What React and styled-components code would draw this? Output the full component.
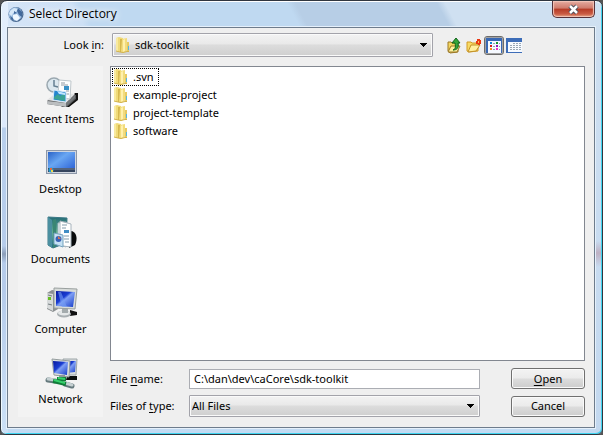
import React from "react";
import styled, { createGlobalStyle } from "styled-components";

const Global = createGlobalStyle`
  *, *::before, *::after { box-sizing: border-box; }
  body { margin: 0; background: #555; font: 11px/16px "Noto Sans", sans-serif; color: #000; }
  button, input, select { font: inherit; color: inherit; margin: 0; }
  svg { display: block; flex: none; }
  u { text-underline-offset: 2px; }
`;

const Window = styled.div`
  display: flex;
  flex-direction: column;
  min-height: 100vh;
  padding: 0 7px 6px 6px;
  border: 1px solid #30363f;
  border-radius: 7px 7px 6px 6px;
  box-shadow: inset 0 1px #fff, inset 1px 0 #effaff, inset -1px -1px #3fd5f1;
  background:
    linear-gradient(#35415500 245px, #35415555 253px, #35415500 262px) left / 6px 100% no-repeat,
    linear-gradient(#b0708000 240px, #b0708066 252px, #b0708000 266px) right / 7px 100% no-repeat,
    linear-gradient(#e4effc 0, #dce9fb 126px, #b8cfec 127px, #b5cbea 290px, #cce1f7 100%) left / 7px 100% no-repeat,
    linear-gradient(#cfe0f1, #c3d8ef) right / 7px 100% no-repeat,
    linear-gradient(#c3dbf3, #c3dbf3) bottom / 100% 7px no-repeat,
    linear-gradient(62deg, #dce9f9 0 20%, #cde0f5 36%, #bfd9f1 37% 62%, #b7cee6 63% 80%, #cfe0f1 81% 100%);
`;

const TitleBar = styled.header`
  display: flex;
  align-items: flex-start;
  height: 26px;
  padding-left: 1px;
  svg { margin-top: 5px; }
`;

const Title = styled.h1`
  flex: 1;
  margin: 4px 0 0 5px;
  font: 12px/18px "Open Sans", sans-serif;
  text-shadow: 0 0 6px #fff, 0 0 8px #fff;
`;

const CloseButton = styled.button`
  display: grid;
  place-items: center;
  width: 43px;
  height: 17px;
  margin-right: 0;
  padding: 0;
  border: 1px solid #56323a;
  border-top: 0;
  border-radius: 0 0 5px 5px;
  box-shadow: inset 0 0 1px 1px #f2c5b9;
  background: linear-gradient(#e4aaa0, #cf7b6c 45%, #b53a25 50%, #c95a43 80%, #e29a7a);
  svg { margin-top: 0; }
`;

const Content = styled.main`
  flex: 1;
  display: flex;
  flex-direction: column;
  gap: 9px;
  padding: 5px 9px 10px 10px;
  border: 1px solid #6e7c8c;
  box-shadow: 0 0 0 1px #e5f0fb;
  background: #efefef;
`;

const LookRow = styled.div`
  display: flex;
  align-items: center;
  gap: 8px;
`;

const LookLabel = styled.label`
  width: 86px;
  text-align: right;
`;

const SelectWrap = styled.div`
  position: relative;
  flex: 1;
  min-width: 0;
`;

const Select = styled.select`
  display: block;
  width: 100%;
  height: ${(p) => (p.$icon ? "24px" : "22px")};
  padding: 0 20px 0 ${(p) => (p.$icon ? "22px" : "2px")};
  appearance: none;
  border: 1px solid #a3a3aa;
  border-radius: 1px;
  outline: 0;
  box-shadow: inset 0 0 0 1px #fafafa;
  background: linear-gradient(#f3f3f3, #e9e9e9 45%, #dcdcdc 50%, #cfcfcf);
`;

const Adornment = styled.span`
  position: absolute;
  pointer-events: none;
  display: flex;
  align-items: center;
  top: 0;
  bottom: 0;
  ${(p) => (p.$side === "left" ? "left: 3px;" : "right: 6px;")}
`;

const Tools = styled.div`
  display: flex;
  align-items: center;
  padding-left: 3px;
  margin-right: 61px;
`;

const ToolButton = styled.button`
  display: grid;
  place-items: center;
  width: 20px;
  height: 19px;
  padding: 0;
  border: ${(p) => (p.$active ? "1px solid #6b6b6b" : "0")};
  border-radius: 3px;
  box-shadow: ${(p) => (p.$active ? "inset 0 0 0 1px #a2a2a2" : "none")};
  background: none;
`;

const Body = styled.div`
  flex: 1;
  display: flex;
  gap: 7px;
`;

const Places = styled.nav`
  display: flex;
  flex-direction: column;
  gap: 19px;
  width: 85px;
  padding: 10px 0;
  background: #f3f3f3;
`;

const Place = styled.button`
  display: flex;
  flex-direction: column;
  align-items: center;
  gap: 1px;
  width: 100%;
  padding: 0;
  border: 0;
  background: none;
  white-space: nowrap;
`;

const Main = styled.div`
  flex: 1;
  display: flex;
  flex-direction: column;
  gap: 7px;
  min-width: 0;
`;

const FileList = styled.ul`
  flex: 1;
  margin: 0;
  padding: 1px;
  list-style: none;
  border: 1px solid #828790;
  background: #fff;
`;

const FileItem = styled.li`
  display: flex;
`;

const FileButton = styled.button`
  display: flex;
  align-items: center;
  gap: 4px;
  height: 18px;
  padding: 0 4px 0 0;
  border: 1px dotted ${(p) => (p.$focused ? "#000" : "transparent")};
  background: none;
`;

const Form = styled.form`
  display: grid;
  grid-template-columns: 79px minmax(0, 1fr) 74px;
  row-gap: 6px;
  align-items: center;
`;

const TextField = styled.input`
  display: block;
  width: 100%;
  height: 20px;
  padding: 0 4px;
  border: 1px solid #abadb3;
  outline: 0;
  background: #fff;
`;

const Field = styled.div`
  margin-right: 31px;
`;

const PushButton = styled.button`
  height: 21px;
  padding: 0;
  border: 1px solid #707070;
  border-radius: 3px;
  box-shadow: inset 0 0 0 1px #fafafa;
  background: linear-gradient(#f3f3f3, #ebebeb 48%, #dcdcdc 52%, #cdcdcd);
`;

const Arrow = () => (
  <svg width="7" height="4" viewBox="0 0 7 4" shapeRendering="crispEdges">
    <path d="M0 0h7v1H6v1H5v1H4v1H3V3H2V2H1V1H0z" />
  </svg>
);

const Folder = () => (
  <svg width="16" height="16" viewBox="0 0 16 16">
    <path d="M1 1l3-1 4 1v14H4l-3-1z" fill="#f0db79" />
    <path d="M1 1h2v13H1z" fill="#f8eaa0" />
    <path d="M5 2h3v13H5z" fill="#d6b84e" />
    <path d="M7 2l5-1v13l-4 2-2-1z" fill="#f2dc7d" />
    <path d="M8 3l2-1v12l-2 1z" fill="#fff0ac" />
    <path d="M12 5h2v9l-2 1z" fill="#e6c964" />
    <path d="M13 9h1v4h-1z" fill="#54b7e1" />
    <path d="M1 14l4 1 3 .5 4-1h2" fill="none" stroke="#d2b34d" />
  </svg>
);

const AppIcon = () => (
  <svg width="16" height="17" viewBox="0 0 16 17">
    <circle cx="8" cy="8.500" r="7.500" fill="#4b6a92" />
    <circle cx="7.500" cy="8" r="6.800" fill="#9cbde0" />
    <path d="M2 5l4-3 4 1-2 3-3 1-1 3-3-2z" fill="#d6e8f8" />
    <path d="M10 2l4 4v5l-3-2-2-4z" fill="#41689b" />
    <path d="M5 9l4-1 3 4-3 3-4-2z" fill="#eff8ff" />
    <path d="M2 10l3 2 1 3-3-2zM6 5l3 2-3 1z" fill="#426a9d" />
  </svg>
);

const CloseIcon = () => (
  <svg width="13" height="11" viewBox="0 0 13 11">
    <path d="M3 2l7 7M10 2L3 9" stroke="#454c5a" strokeWidth="4.500" />
    <path d="M3 2l7 7M10 2L3 9" stroke="#fff" strokeWidth="2.500" />
  </svg>
);

const UpIcon = () => (
  <svg width="16" height="17" viewBox="0 0 16 17">
    <path d="M2 5h3l1 1h6v9l-8 1-2-2z" fill="#f5d760" stroke="#9b7826" />
    <path d="M2 15l3-6h9l-3 6z" fill="#fff19e" stroke="#9b7826" />
    <path d="M7 13c2-1 3-2 2-7H6l4-5 4 5h-2c1 5-1 7-5 7z" fill="#35a63a" stroke="#12651b" />
  </svg>
);

const NewFolderIcon = () => (
  <svg width="16" height="17" viewBox="0 0 16 17">
    <path d="M1 5h4l1 1h6v8l-9 1-2-1z" fill="#f7da65" stroke="#d29a25" />
    <path d="M2 15l3-7h9l-4 6z" fill="#fff0a0" stroke="#c29128" />
    <path d="M11 2h3v1h1v4h-1v1h-2V7h-2V4h1z" fill="#e93814" />
    <path d="M12 4h1v2h-1z" fill="#ffc14d" />
  </svg>
);

const ListIcon = () => (
  <svg width="16" height="15" viewBox="0 0 16 15" shapeRendering="crispEdges">
    <path d="M0 0h16v15H0z" fill="#3868b4" />
    <path d="M2 3h13v12H2z" fill="#f5f9ff" />
    <path d="M4 4h2v2H4z" fill="#1386d5" />
    <path d="M10 4h2v2h-2z" fill="#17952c" />
    <path d="M4 7h2v2H4z" fill="#d11b24" />
    <path d="M10 7h2v2h-2z" fill="#951bb3" />
    <path d="M4 10h2v2H4z" fill="#ee8b22" />
    <path d="M10 10h2v2h-2z" fill="#f32cc5" />
    <path d="M7 5.500h2M13 5.500h1M7 8.500h2M13 8.500h1M7 11.500h2M13 11.500h1" stroke="#8ca0b8" />
  </svg>
);

const DetailsIcon = () => (
  <svg width="16" height="15" viewBox="0 0 16 15" shapeRendering="crispEdges">
    <path d="M0 0h16v15H0z" fill="#3d6db8" />
    <path d="M2 4h14v10H2z" fill="#f6faff" />
    <path d="M7 5.500h8M4 7.500h11M4 9.500h11M4 11.500h11" stroke="#9aa7b4" strokeDasharray="2 1" />
  </svg>
);

const Gradients = () => (
  <defs>
    <linearGradient id="screenBlue" x1="0" y1="0" x2="1" y2="1">
      <stop stopColor="#07189e" />
      <stop offset=".4" stopColor="#1b3ed2" />
      <stop offset=".5" stopColor="#7f9ff4" />
      <stop offset="1" stopColor="#143bc8" />
    </linearGradient>
    <linearGradient id="deskBlue" x1="0" y1="0" x2="1" y2="1">
      <stop stopColor="#2a64c8" />
      <stop offset=".4" stopColor="#69a6f2" />
      <stop offset="1" stopColor="#2459d2" />
    </linearGradient>
    <linearGradient id="binder" x1="0" y1="0" x2="0" y2="1">
      <stop stopColor="#236a75" />
      <stop offset=".5" stopColor="#63af91" />
      <stop offset="1" stopColor="#236789" />
    </linearGradient>
  </defs>
);

const PlaceIcon = ({ children }) => (
  <svg width="34" height="34" viewBox="0 0 34 34">
    <Gradients />
    {children}
  </svg>
);

const RecentIcon = () => (
  <PlaceIcon>
    <path d="M23 27l8-10h3v7l-9 7h-8z" fill="#111" />
    <path d="M3 25l9-7 20 1v4l-9 8L3 28z" fill="#55585b" />
    <path d="M3 24l9-7 19 1-9 9z" fill="#e1e2e3" />
    <path d="M3 25l19 2v4L3 28z" fill="#bbbec0" />
    <path d="M22 27l9-8v3l-9 9z" fill="#74787b" />
    <circle cx="10" cy="9" r="7" fill="#dce8ef" stroke="#9ba8b0" strokeWidth="1.500" />
    <path d="M10 4v6l4 1" fill="none" stroke="#647f92" strokeWidth="1.500" />
    <path d="M15 4l12 1-1 18-12-2z" fill="#fff" stroke="#bfc7cc" />
    <path d="M17 7h4M17 9h7M22 12h3M22 15h3M22 18h3" stroke="#939ca5" />
    <path d="M20 10h5v4h-5z" fill="#3c92c7" />
    <path d="M10 14l12 2v10L9 24z" fill="#2385cf" stroke="#d8eafa" />
    <path d="M10 21l4-3 2 2 5-3v8l-11-2z" fill="#3ba395" />
    <path d="M13 15l8 2v2l-6-1z" fill="#bfe5ff" />
  </PlaceIcon>
);

const DesktopIcon = () => (
  <PlaceIcon>
    <path d="M2 4h31v24H2z" fill="#8d98a9" />
    <path d="M3 5h29v22H3z" fill="#d0d6df" />
    <path d="M4 6h27v20H4z" fill="url(#deskBlue)" />
    <path d="M4 22h27v4H4z" fill="#35455e" />
    <path d="M9 23h22" stroke="#74839a" />
    <circle cx="7" cy="24" r="2.500" fill="#279bd0" />
    <path d="M6 22h2v2H6z" fill="#ef6832" />
    <path d="M7 24h2v2H7z" fill="#f0d549" />
  </PlaceIcon>
);

const DocumentsIcon = () => (
  <PlaceIcon>
    <path d="M25 15c8-1 9 8 6 14l-6 3z" fill="#080a0b" />
    <path d="M4 1l19 1-1 25-13 5-5-3z" fill="url(#binder)" stroke="#397784" />
    <path d="M4 1l4 3v28l-4-3z" fill="#4b8fa0" />
    <path d="M9 4l3-1v27l-3 2z" fill="#3a8674" />
    <path d="M14 7l8-1v25l-8-3z" fill="#edf7fa" stroke="#a5b8bf" />
    <path d="M16 5l11 3v23l-8-1-3-2z" fill="#fff" stroke="#a8b4bd" />
    <path d="M18 9h5M18 12h4M20 20h5M20 23h5M21 26h4" stroke="#839cab" />
    <path d="M20 14h5v3h-5z" fill="#418dc4" />
    <path d="M10 17l9 2v12l-9-3z" fill="#c5e1f4" stroke="#75a2bd" />
    <circle cx="14.500" cy="23" r="3" fill="#3862b4" />
    <path d="M14 23v-3l3 3z" fill="#d86f52" />
  </PlaceIcon>
);

const ComputerIcon = () => (
  <PlaceIcon>
    <path d="M26 24l7 2v3l-7 1z" fill="#111" />
    <path d="M3 7l5-3 6 1v18l-5 3-6-3z" fill="#8c9092" />
    <path d="M3 7l6 1v17l-6-3z" fill="#d7dadb" />
    <path d="M4 9l4 1M4 18l4 1" stroke="#737b7e" />
    <path d="M4 11h3v3H4z" fill="#68be24" />
    <ellipse cx="20" cy="28" rx="7" ry="3.500" fill="#a9afb2" />
    <ellipse cx="20" cy="27" rx="6" ry="2.500" fill="#e5e8e9" />
    <path d="M18 22h6v5h-6z" fill="#a4abad" />
    <path d="M10 2l23 1-2 20-21-1z" fill="#d8dcda" stroke="#999f9e" />
    <path d="M12 5l19 1-2 15-17-1z" fill="url(#screenBlue)" />
    <path d="M17 6l6 15h-5l-4-15z" fill="#739df4" opacity=".6" />
  </PlaceIcon>
);

const NetworkIcon = () => (
  <PlaceIcon>
    <path d="M23 20h10v4H22z" fill="#0c1010" />
    <path d="M19 3h14l-1 16H20z" fill="#d8dddf" stroke="#9da6a8" />
    <path d="M21 5h11l-1 11-9 1z" fill="url(#screenBlue)" />
    <path d="M8 3l18 2-1 16-15-2z" fill="#dce0df" stroke="#959d9e" />
    <path d="M9 5l15 1-1 13-13-2z" fill="url(#screenBlue)" />
    <path d="M15 19h6v5h-6z" fill="#8b9798" />
    <path d="M4 24l7 1M21 28l7 2" stroke="#65797d" strokeWidth="5" strokeLinecap="round" />
    <path d="M4 23l7 1M21 27l7 2" stroke="#c5d0d2" strokeWidth="3" strokeLinecap="round" />
    <path d="M9 25l13 3M13 23h9" stroke="#117c39" strokeWidth="4" />
    <path d="M10 24l11 3M14 22l7 1" stroke="#35d16b" strokeWidth="2" />
  </PlaceIcon>
);

const places = [
  ["Recent Items", RecentIcon],
  ["Desktop", DesktopIcon],
  ["Documents", DocumentsIcon],
  ["Computer", ComputerIcon],
  ["Network", NetworkIcon],
];

const files = [".svn", "example-project", "project-template", "software"];

export default function App() {
  return (
    <>
      <Global />
      <Window>
        <TitleBar>
          <AppIcon />
          <Title>Select Directory</Title>
          <CloseButton aria-label="Close"><CloseIcon /></CloseButton>
        </TitleBar>
        <Content>
          <LookRow>
            <LookLabel htmlFor="look">Look <u>i</u>n:</LookLabel>
            <SelectWrap>
              <Select id="look" $icon><option>sdk-toolkit</option></Select>
              <Adornment $side="left"><Folder /></Adornment>
              <Adornment $side="right"><Arrow /></Adornment>
            </SelectWrap>
            <Tools>
              <ToolButton aria-label="Up one level"><UpIcon /></ToolButton>
              <ToolButton aria-label="Create new folder"><NewFolderIcon /></ToolButton>
              <ToolButton aria-label="List" aria-pressed="true" $active><ListIcon /></ToolButton>
              <ToolButton aria-label="Details"><DetailsIcon /></ToolButton>
            </Tools>
          </LookRow>
          <Body>
            <Places>
              {places.map(([name, Icon]) => (
                <Place key={name}><Icon />{name}</Place>
              ))}
            </Places>
            <Main>
              <FileList>
                {files.map((name, i) => (
                  <FileItem key={name}>
                    <FileButton $focused={i === 0}><Folder />{name}</FileButton>
                  </FileItem>
                ))}
              </FileList>
              <Form onSubmit={(e) => e.preventDefault()}>
                <label htmlFor="name">File <u>n</u>ame:</label>
                <Field><TextField id="name" defaultValue="C:\dan\dev\caCore\sdk-toolkit" /></Field>
                <PushButton type="submit"><u>O</u>pen</PushButton>
                <label htmlFor="type">Files of <u>t</u>ype:</label>
                <Field>
                  <SelectWrap>
                    <Select id="type"><option>All Files</option></Select>
                    <Adornment $side="right"><Arrow /></Adornment>
                  </SelectWrap>
                </Field>
                <PushButton type="button">Cancel</PushButton>
              </Form>
            </Main>
          </Body>
        </Content>
      </Window>
    </>
  );
}
